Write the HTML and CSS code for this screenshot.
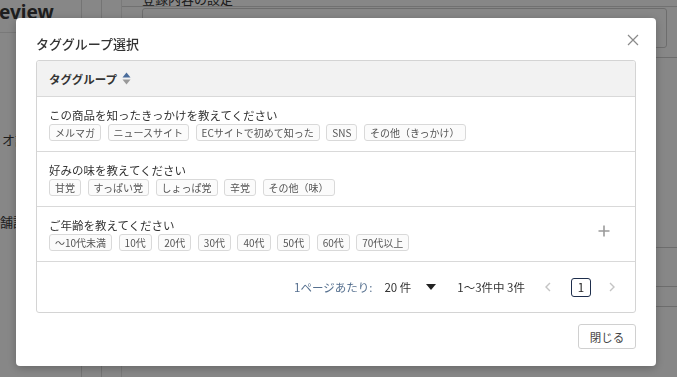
FILE: index.html
```html
<!DOCTYPE html>
<html lang="ja">
<head>
<meta charset="utf-8">
<link rel="stylesheet" href="styles.css">
</head>
<body>
<div class="page">
  <aside class="side">
    <div class="brand">eview</div>
    <div class="side-item item-a">オ設定</div>
    <div class="side-item item-b">舗設定</div>
  </aside>
  <div class="rail"></div>
  <div class="rail rail-b"></div>
  <main class="main">
    <div class="main-top"></div>
    <div class="main-body">
      <div class="field-label">登録内容の設定</div>
      <div class="field-input"></div>
      <div class="main-row r1"></div>
      <div class="main-row r2"></div>
      <div class="main-row r3"></div>
      <div class="main-row r4"></div>
    </div>
  </main>
</div>

<div class="overlay">
  <div class="modal">
    <div class="modal-head">
      <h2 class="modal-title">タググループ選択</h2>
      <button class="modal-close" aria-label="close">
        <svg width="12" height="12" viewBox="0 0 12 12"><path d="M1 1L11 11M11 1L1 11" stroke="#8a8a8a" stroke-width="1.2" fill="none"/></svg>
      </button>
    </div>
    <div class="table">
      <div class="table-head">
        <span>タググループ</span>
        <svg class="sort" width="9" height="13" viewBox="0 0 9 13"><path d="M4.5 0.5L8.5 5.5H0.5Z" fill="#4a6c9b"/><path d="M4.5 12.5L8.5 7.5H0.5Z" fill="#9a9a9a"/></svg>
      </div>
      <div class="row">
        <div class="row-main">
          <div class="row-title">この商品を知ったきっかけを教えてください</div>
          <div class="tags">
            <span class="tag">メルマガ</span>
            <span class="tag">ニュースサイト</span>
            <span class="tag">ECサイトで初めて知った</span>
            <span class="tag">SNS</span>
            <span class="tag">その他（きっかけ）</span>
          </div>
        </div>
      </div>
      <div class="row">
        <div class="row-main">
          <div class="row-title">好みの味を教えてください</div>
          <div class="tags">
            <span class="tag">甘党</span>
            <span class="tag">すっぱい党</span>
            <span class="tag">しょっぱ党</span>
            <span class="tag">辛党</span>
            <span class="tag">その他（味）</span>
          </div>
        </div>
      </div>
      <div class="row">
        <div class="row-main">
          <div class="row-title">ご年齢を教えてください</div>
          <div class="tags">
            <span class="tag">～10代未満</span>
            <span class="tag">10代</span>
            <span class="tag">20代</span>
            <span class="tag">30代</span>
            <span class="tag">40代</span>
            <span class="tag">50代</span>
            <span class="tag">60代</span>
            <span class="tag">70代以上</span>
          </div>
        </div>
        <svg class="plus" width="12" height="12" viewBox="0 0 12 12"><path d="M6 0.5V11.5M0.5 6H11.5" stroke="#9b9b9b" stroke-width="1.6" fill="none"/></svg>
      </div>
      <div class="pager">
        <span class="per-label">1ページあたり:</span>
        <span class="per-value">20 件</span>
        <svg class="caret" width="10" height="6" viewBox="0 0 10 6"><path d="M0 0H10L5 6Z" fill="#222"/></svg>
        <span class="range">1〜3件中 3件</span>
        <svg class="nav" width="6" height="10" viewBox="0 0 6 10"><path d="M5 1L1 5L5 9" stroke="#c4c4c4" stroke-width="1.4" fill="none"/></svg>
        <span class="page-num">1</span>
        <svg class="nav" width="6" height="10" viewBox="0 0 6 10"><path d="M1 1L5 5L1 9" stroke="#c4c4c4" stroke-width="1.4" fill="none"/></svg>
      </div>
    </div>
    <div class="modal-foot">
      <button class="btn">閉じる</button>
    </div>
  </div>
</div>
</body>
</html>
```

FILE: styles.css
```css
* { box-sizing: border-box; }
html, body { margin: 0; padding: 0; }
body {
  font-family: "Noto Sans CJK JP", "Noto Sans", sans-serif;
  color: #333;
  width: 677px;
  height: 377px;
  overflow: hidden;
}

/* underlying page */
.page {
  display: grid;
  grid-template-columns: 82px 20px 20px 1fr;
  height: 377px;
  background: #fff;
}
.side { border-right: 1px solid #dcdcdc; overflow: hidden; }
.brand {
  font-family: "Noto Sans", sans-serif;
  font-weight: 700;
  font-size: 19px;
  line-height: 22px;
  margin: 0 0 0 -1px;
  padding-top: 1px;
  height: 33px;
  color: #3a3a3a;
  border-bottom: 1px solid #e4e4e4;
}
.side-item {
  font-size: 13px;
  color: #3a3a3a;
  white-space: nowrap;
  line-height: 16px;
}
.item-a { margin: 99px 0 0 2px; }
.item-b { margin: 66px 0 0 0; }
.rail { border-right: 1px solid #dcdcdc; }
.rail-b { border-right: 1px solid #e6e6e6; }
.main { overflow: hidden; }
.main-top { height: 8px; border-bottom: 1px solid #d6d6d6; margin-top: -1px; }
.main-body { padding-left: 20px; }
.field-label { font-size: 13px; line-height: 14px; margin-top: -15px; height: 16px; color: #333; }
.field-input { height: 40px; border: 1px solid #cfcfcf; border-radius: 3px; margin-right: 10px; }
.main-row { border-bottom: 1px solid #cfcfcf; margin-left: -20px; }
.r1 { height: 10px; }
.r2 { height: 190px; }
.r3 { height: 39px; }
.r4 { height: 20px; }

/* overlay + modal */
.overlay {
  position: fixed;
  inset: 0;
  background: rgba(0, 0, 0, 0.47);
}
.modal {
  position: absolute;
  left: 16px;
  top: 18px;
  width: 640px;
  height: 348px;
  background: #fff;
  border-radius: 4px;
  box-shadow: 0 2px 10px rgba(0, 0, 0, 0.25);
  padding: 16px 20px 17px;
  display: flex;
  flex-direction: column;
}
.modal-head {
  display: flex;
  align-items: center;
  justify-content: space-between;
  height: 20px;
  margin-bottom: 6px;
}
.modal-title {
  margin: 0;
  font-size: 13px;
  font-weight: 500;
  line-height: 20px;
  color: #333;
}
.modal-close {
  border: 0;
  background: none;
  padding: 0;
  width: 12px;
  height: 12px;
  margin: -8px -3px 0 0;
  display: flex;
}

.table {
  border: 1px solid #d4d4d4;
  border-radius: 3px;
  height: 253px;
  display: flex;
  flex-direction: column;
}
.table-head {
  height: 36px;
  background: #f2f2f2;
  border-bottom: 1px solid #d9d9d9;
  display: flex;
  align-items: center;
  padding-left: 12px;
  gap: 5px;
  font-size: 11.5px;
  font-weight: 700;
  color: #333;
  border-radius: 3px 3px 0 0;
}

.row {
  height: 55px;
  border-bottom: 1px solid #d9d9d9;
  display: flex;
  align-items: center;
  padding: 0 12px;
}
.row-main { flex: 1; padding-top: 0; }
.row-title {
  font-size: 11.5px;
  line-height: 16px;
  color: #333;
  margin-bottom: 1px;
}
.tags { display: flex; gap: 6.5px; }
.tag {
  height: 17px;
  line-height: 15px;
  padding: 0 5px;
  border: 1px solid #d9d9d9;
  border-radius: 3px;
  background: #fbfbfb;
  font-size: 10px;
  color: #555;
  white-space: nowrap;
}
.plus { margin: -7px 13px 0 0; }

.pager {
  flex: 1;
  display: flex;
  align-items: center;
  justify-content: flex-end;
  padding-right: 20px;
  font-size: 11.5px;
  color: #333;
}
.per-label { color: #56708f; margin-right: 12px; }
.per-value { margin-right: 15px; }
.caret { margin-right: 21px; }
.range { margin-right: 20px; }
.page-num {
  width: 20px;
  height: 19px;
  border: 1px solid #1e2e4c;
  border-radius: 3px;
  display: flex;
  align-items: center;
  justify-content: center;
  margin: 0 18px 0 20px;
  font-size: 11.5px;
  color: #222;
}

.modal-foot {
  display: flex;
  justify-content: flex-end;
  margin-top: 11px;
}
.btn {
  width: 58px;
  height: 25px;
  border: 1px solid #d0d0d0;
  border-radius: 3px;
  background: #fff;
  font-family: "Noto Sans CJK JP", sans-serif;
  font-size: 11.5px;
  color: #444;
  padding: 0;
}
```
